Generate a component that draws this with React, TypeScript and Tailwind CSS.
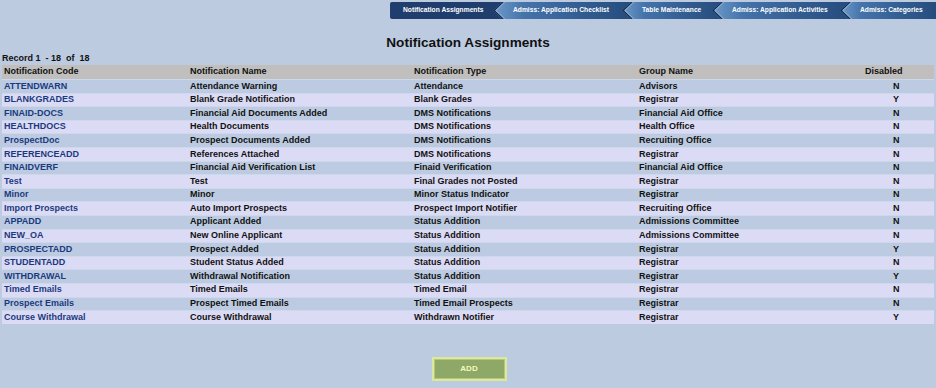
import React from "react";

const rows: [string, string, string, string, string][] = [
  ["ATTENDWARN", "Attendance Warning", "Attendance", "Advisors", "N"],
  ["BLANKGRADES", "Blank Grade Notification", "Blank Grades", "Registrar", "Y"],
  ["FINAID-DOCS", "Financial Aid Documents Added", "DMS Notifications", "Financial Aid Office", "N"],
  ["HEALTHDOCS", "Health Documents", "DMS Notifications", "Health Office", "N"],
  ["ProspectDoc", "Prospect Documents Added", "DMS Notifications", "Recruiting Office", "N"],
  ["REFERENCEADD", "References Attached", "DMS Notifications", "Registrar", "N"],
  ["FINAIDVERF", "Financial Aid Verification List", "Finaid Verification", "Financial Aid Office", "N"],
  ["Test", "Test", "Final Grades not Posted", "Registrar", "N"],
  ["Minor", "Minor", "Minor Status Indicator", "Registrar", "N"],
  ["Import Prospects", "Auto Import Prospects", "Prospect Import Notifier", "Recruiting Office", "N"],
  ["APPADD", "Applicant Added", "Status Addition", "Admissions Committee", "N"],
  ["NEW_OA", "New Online Applicant", "Status Addition", "Admissions Committee", "N"],
  ["PROSPECTADD", "Prospect Added", "Status Addition", "Registrar", "Y"],
  ["STUDENTADD", "Student Status Added", "Status Addition", "Registrar", "N"],
  ["WITHDRAWAL", "Withdrawal Notification", "Status Addition", "Registrar", "Y"],
  ["Timed Emails", "Timed Emails", "Timed Email", "Registrar", "N"],
  ["Prospect Emails", "Prospect Timed Emails", "Timed Email Prospects", "Registrar", "N"],
  ["Course Withdrawal", "Course Withdrawal", "Withdrawn Notifier", "Registrar", "Y"],
];

const tabs = [
  { label: "Admiss: Application Checklist", w: "w-[138px]" },
  { label: "Table Maintenance", w: "w-[99px]" },
  { label: "Admiss: Application Activities", w: "w-[137px]" },
  { label: "Admiss: Categories", w: "w-[96px]" },
];

function Chevron() {
  return (
    <svg className="absolute left-0 top-0" width="12" height="17" viewBox="0 0 12 17">
      <polyline points="10,0 1,8.5 10,17" fill="none" stroke="#16294a" strokeWidth="1.6" />
      <polyline points="11.8,0 2.8,8.5 11.8,17" fill="none" stroke="#a9c6e6" strokeWidth="1" opacity="0.8" />
    </svg>
  );
}

export default function App() {
  return (
    <div
      className="w-[936px] h-[388px] bg-[#bccbe0] overflow-hidden text-[#111]"
      style={{ fontFamily: '"Liberation Sans", Arial, sans-serif' }}
    >
      {/* Tabs */}
      <div className="flex justify-end pt-[2px] h-[19px]">
        <div className="flex h-[17px]">
          <div className="w-[112px] h-full bg-[#1f3d6d] rounded-l-[2px] flex items-center pl-[13px] text-white font-bold text-[6.7px] whitespace-nowrap">
            Notification Assignments
          </div>
          {tabs.map((t) => (
            <div
              key={t.label}
              className={`relative -ml-[9px] ${t.w} h-full flex items-center pl-[20px] text-white font-bold text-[6.7px] whitespace-nowrap bg-[linear-gradient(to_right,#6f9bcb_0%,#4574aa_22%,#325c90_65%,#264c7d_100%)] [clip-path:polygon(9.5px_0,100%_0,100%_100%,9.5px_100%,0_50%)]`}
            >
              <Chevron />
              <span className="relative">{t.label}</span>
            </div>
          ))}
        </div>
      </div>

      {/* Title */}
      <div className="mt-[16px] h-[16px] leading-[16px] text-center font-bold text-[13.6px]">
        Notification Assignments
      </div>

      {/* Record count */}
      <div className="h-[14px] leading-[15px] pl-[2px] font-bold text-[9px] whitespace-pre">
        {"Record 1  - 18  of  18"}
      </div>

      {/* Table */}
      <div className="mx-[2px] flex flex-col gap-[1px] bg-[#cdd8ea] text-[9px] font-bold">
        <div className="flex h-[14px] items-center bg-[#c0bfbd] text-[#111]">
          <div className="w-[186px] pl-[2px]">Notification Code</div>
          <div className="w-[224px] pl-[2px]">Notification Name</div>
          <div className="w-[225px] pl-[2px]">Notification Type</div>
          <div className="w-[226px] pl-[2px]">Group Name</div>
          <div className="pl-[2px]">Disabled</div>
        </div>
        {rows.map((r, i) => (
          <div
            key={r[0]}
            className={`flex h-[12.6px] items-center ${i % 2 === 0 ? "bg-[#bccbe1]" : "bg-[#dbdbf5]"}`}
          >
            <div className="w-[186px] pl-[2px] text-[#1b3a7e]">{r[0]}</div>
            <div className="w-[224px] pl-[2px]">{r[1]}</div>
            <div className="w-[225px] pl-[2px]">{r[2]}</div>
            <div className="w-[226px] pl-[2px]">{r[3]}</div>
            <div className="pl-[30px]">{r[4]}</div>
          </div>
        ))}
      </div>

      {/* Add button */}
      <div className="flex justify-center mt-[33px] pl-[2px]">
        <div className="w-[75px] h-[24px] border-2 border-[#dce89c] bg-[#dce89c]">
          <div className="w-full h-full bg-[#8ea868] border border-[#b7c77e] flex items-center justify-center text-[#f6f9be] font-bold text-[8px]">
            ADD
          </div>
        </div>
      </div>
    </div>
  );
}
